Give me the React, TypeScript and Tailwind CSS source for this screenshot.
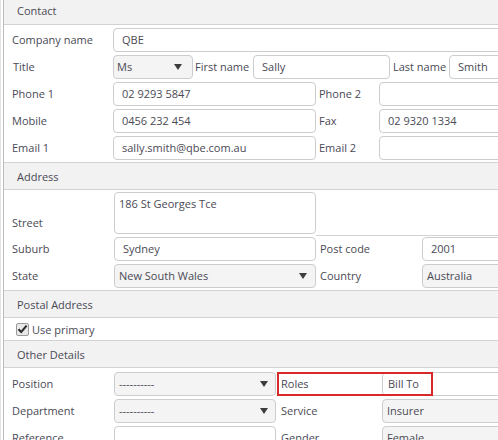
import React from 'react';

function Caret() {
    return (
        <svg width="8" height="6" viewBox="0 0 8 6" className="shrink-0">
            <polygon points="0,0 8,0 4,6" fill="#3d3d3d" />
        </svg>
    );
}

function Input({ value, className = '' }: { value?: string; className?: string }) {
    return (
        <div className={`h-[24px] shrink-0 rounded-[4px] border border-[#cdcdcd] bg-white pl-[8px] flex items-center whitespace-nowrap ${className}`}>
            {value}
        </div>
    );
}

function Select({ value, className = '', caret = true, pad = 'pr-[8px]' }: { value: string; className?: string; caret?: boolean; pad?: string }) {
    return (
        <div className={`h-[24px] shrink-0 rounded-[4px] border border-[#cdcdcd] bg-[#f4f4f4] pl-[4px] ${pad} flex items-center justify-between whitespace-nowrap ${className}`}>
            <span>{value}</span>
            {caret && <Caret />}
        </div>
    );
}

function Header({ title, first = false }: { title: string; first?: boolean }) {
    return (
        <div className={`${first ? 'h-[25px] border-b pb-[3px]' : 'h-[28px] border-y'} border-[#d2d2d2] bg-[#f2f2f2] flex items-center pl-[13px]`}>
            {title}
        </div>
    );
}

function Label({ text, className = '' }: { text: string; className?: string }) {
    return <div className={`shrink-0 whitespace-nowrap ${className}`}>{text}</div>;
}

export default function App() {
    return (
        <div className="w-[498px] h-[440px] overflow-hidden bg-white font-['Open_Sans',sans-serif] text-[11px] leading-[15px] text-[#4a4a55]">
            <div className="border-l border-[#e4e4e4] pl-[2px] h-full">
                <div className="border-l border-[#bcbcbc] w-[640px] h-full">
                    <Header title="Contact" first />

                    <div className="pt-[1px]">
                        <div className="h-[27px] flex items-center">
                            <Label text="Company name" className="w-[109px] pl-[8px]" />
                            <Input value="QBE" className="w-[420px]" />
                        </div>
                        <div className="h-[27px] flex items-center">
                            <Label text="Title" className="w-[109px] pl-[9px]" />
                            <Select value="Ms" className="w-[80px] !pl-[3px]" pad="pr-[10px]" />
                            <Label text="First name" className="w-[60px] pl-[2px]" />
                            <Input value="Sally" className="w-[137px]" />
                            <Label text="Last name" className="w-[59px] pl-[3px]" />
                            <Input value="Smith" className="w-[150px]" />
                        </div>
                        <div className="h-[27px] flex items-center">
                            <Label text="Phone 1" className="w-[109px] pl-[8px]" />
                            <Input value="02 9293 5847" className="w-[203px]" />
                            <Label text="Phone 2" className="w-[63px] pl-[3px]" />
                            <Input className="w-[200px]" />
                        </div>
                        <div className="h-[27px] flex items-center">
                            <Label text="Mobile" className="w-[109px] pl-[8px]" />
                            <Input value="0456 232 454" className="w-[203px]" />
                            <Label text="Fax" className="w-[63px] pl-[3px]" />
                            <Input value="02 9320 1334" className="w-[200px]" />
                        </div>
                        <div className="h-[27px] flex items-center">
                            <Label text="Email 1" className="w-[109px] pl-[8px]" />
                            <Input value="sally.smith@qbe.com.au" className="w-[203px]" />
                            <Label text="Email 2" className="w-[63px] pl-[3px]" />
                            <Input className="w-[200px]" />
                        </div>
                    </div>

                    <div className="pt-[1px]">
                        <Header title="Address" />
                    </div>

                    <div className="h-[45px] flex items-start pt-[2px]">
                        <Label text="Street" className="w-[110px] pl-[8px] pt-[23px]" />
                        <div className="w-[202px] h-[42px] shrink-0 rounded-[4px] border border-[#cdcdcd] bg-white pl-[4px] pt-[3px]">
                            186 St Georges Tce
                        </div>
                        <div className="flex-1 self-stretch border-b border-[#d2d2d2] -mb-[1px]" />
                    </div>
                    <div className="h-[27px] flex items-center">
                        <Label text="Suburb" className="w-[110px] pl-[8px]" />
                        <Input value="Sydney" className="w-[202px]" />
                        <Label text="Post code" className="w-[106px] pl-[4px]" />
                        <Input value="2001" className="w-[200px]" />
                    </div>
                    <div className="h-[27px] flex items-center">
                        <Label text="State" className="w-[110px] pl-[8px]" />
                        <Select value="New South Wales" className="w-[202px]" />
                        <Label text="Country" className="w-[106px] pl-[4px]" />
                        <Select value="Australia" className="w-[200px]" caret={false} />
                    </div>

                    <div className="pt-[1px]">
                        <Header title="Postal Address" />
                    </div>
                    <div className="h-[22px] flex items-center pl-[12px] gap-[3px]">
                        <div className="w-[13px] h-[13px] rounded-[2px] border border-[#9a9a9a] bg-[#e8e8e8] flex items-center justify-center">
                            <svg width="11" height="10" viewBox="0 0 11 10">
                                <path d="M1.5 5.2 L4.2 8 L9.6 1.6" fill="none" stroke="#2a2a2a" strokeWidth="2" />
                            </svg>
                        </div>
                        <span>Use primary</span>
                    </div>

                    <Header title="Other Details" />

                    <div className="pt-[2px]">
                        <div className="h-[27px] flex items-center">
                            <Label text="Position" className="w-[110px] pl-[8px]" />
                            <Select value="----------" className="w-[162px]" pad="pr-[7px]" />
                            <div className="relative w-[106px] h-[24px] shrink-0 flex items-center pl-[5px]">
                                Roles
                                <div className="absolute left-[1px] top-[0px] w-[156px] h-[24px] border-2 border-[#d7282a] pointer-events-none z-10" />
                            </div>
                            <Input value="Bill To" className="w-[200px] !pl-[5px]" />
                        </div>
                        <div className="h-[27px] flex items-center">
                            <Label text="Department" className="w-[110px] pl-[8px]" />
                            <Select value="----------" className="w-[162px]" pad="pr-[7px]" />
                            <Label text="Service" className="w-[106px] pl-[5px]" />
                            <Select value="Insurer" className="w-[200px]" caret={false} />
                        </div>
                        <div className="h-[27px] flex items-center">
                            <Label text="Reference" className="w-[110px] pl-[8px]" />
                            <Input className="w-[162px]" />
                            <Label text="Gender" className="w-[106px] pl-[5px]" />
                            <Select value="Female" className="w-[200px]" caret={false} />
                        </div>
                    </div>
                </div>
            </div>
        </div>
    );
}
